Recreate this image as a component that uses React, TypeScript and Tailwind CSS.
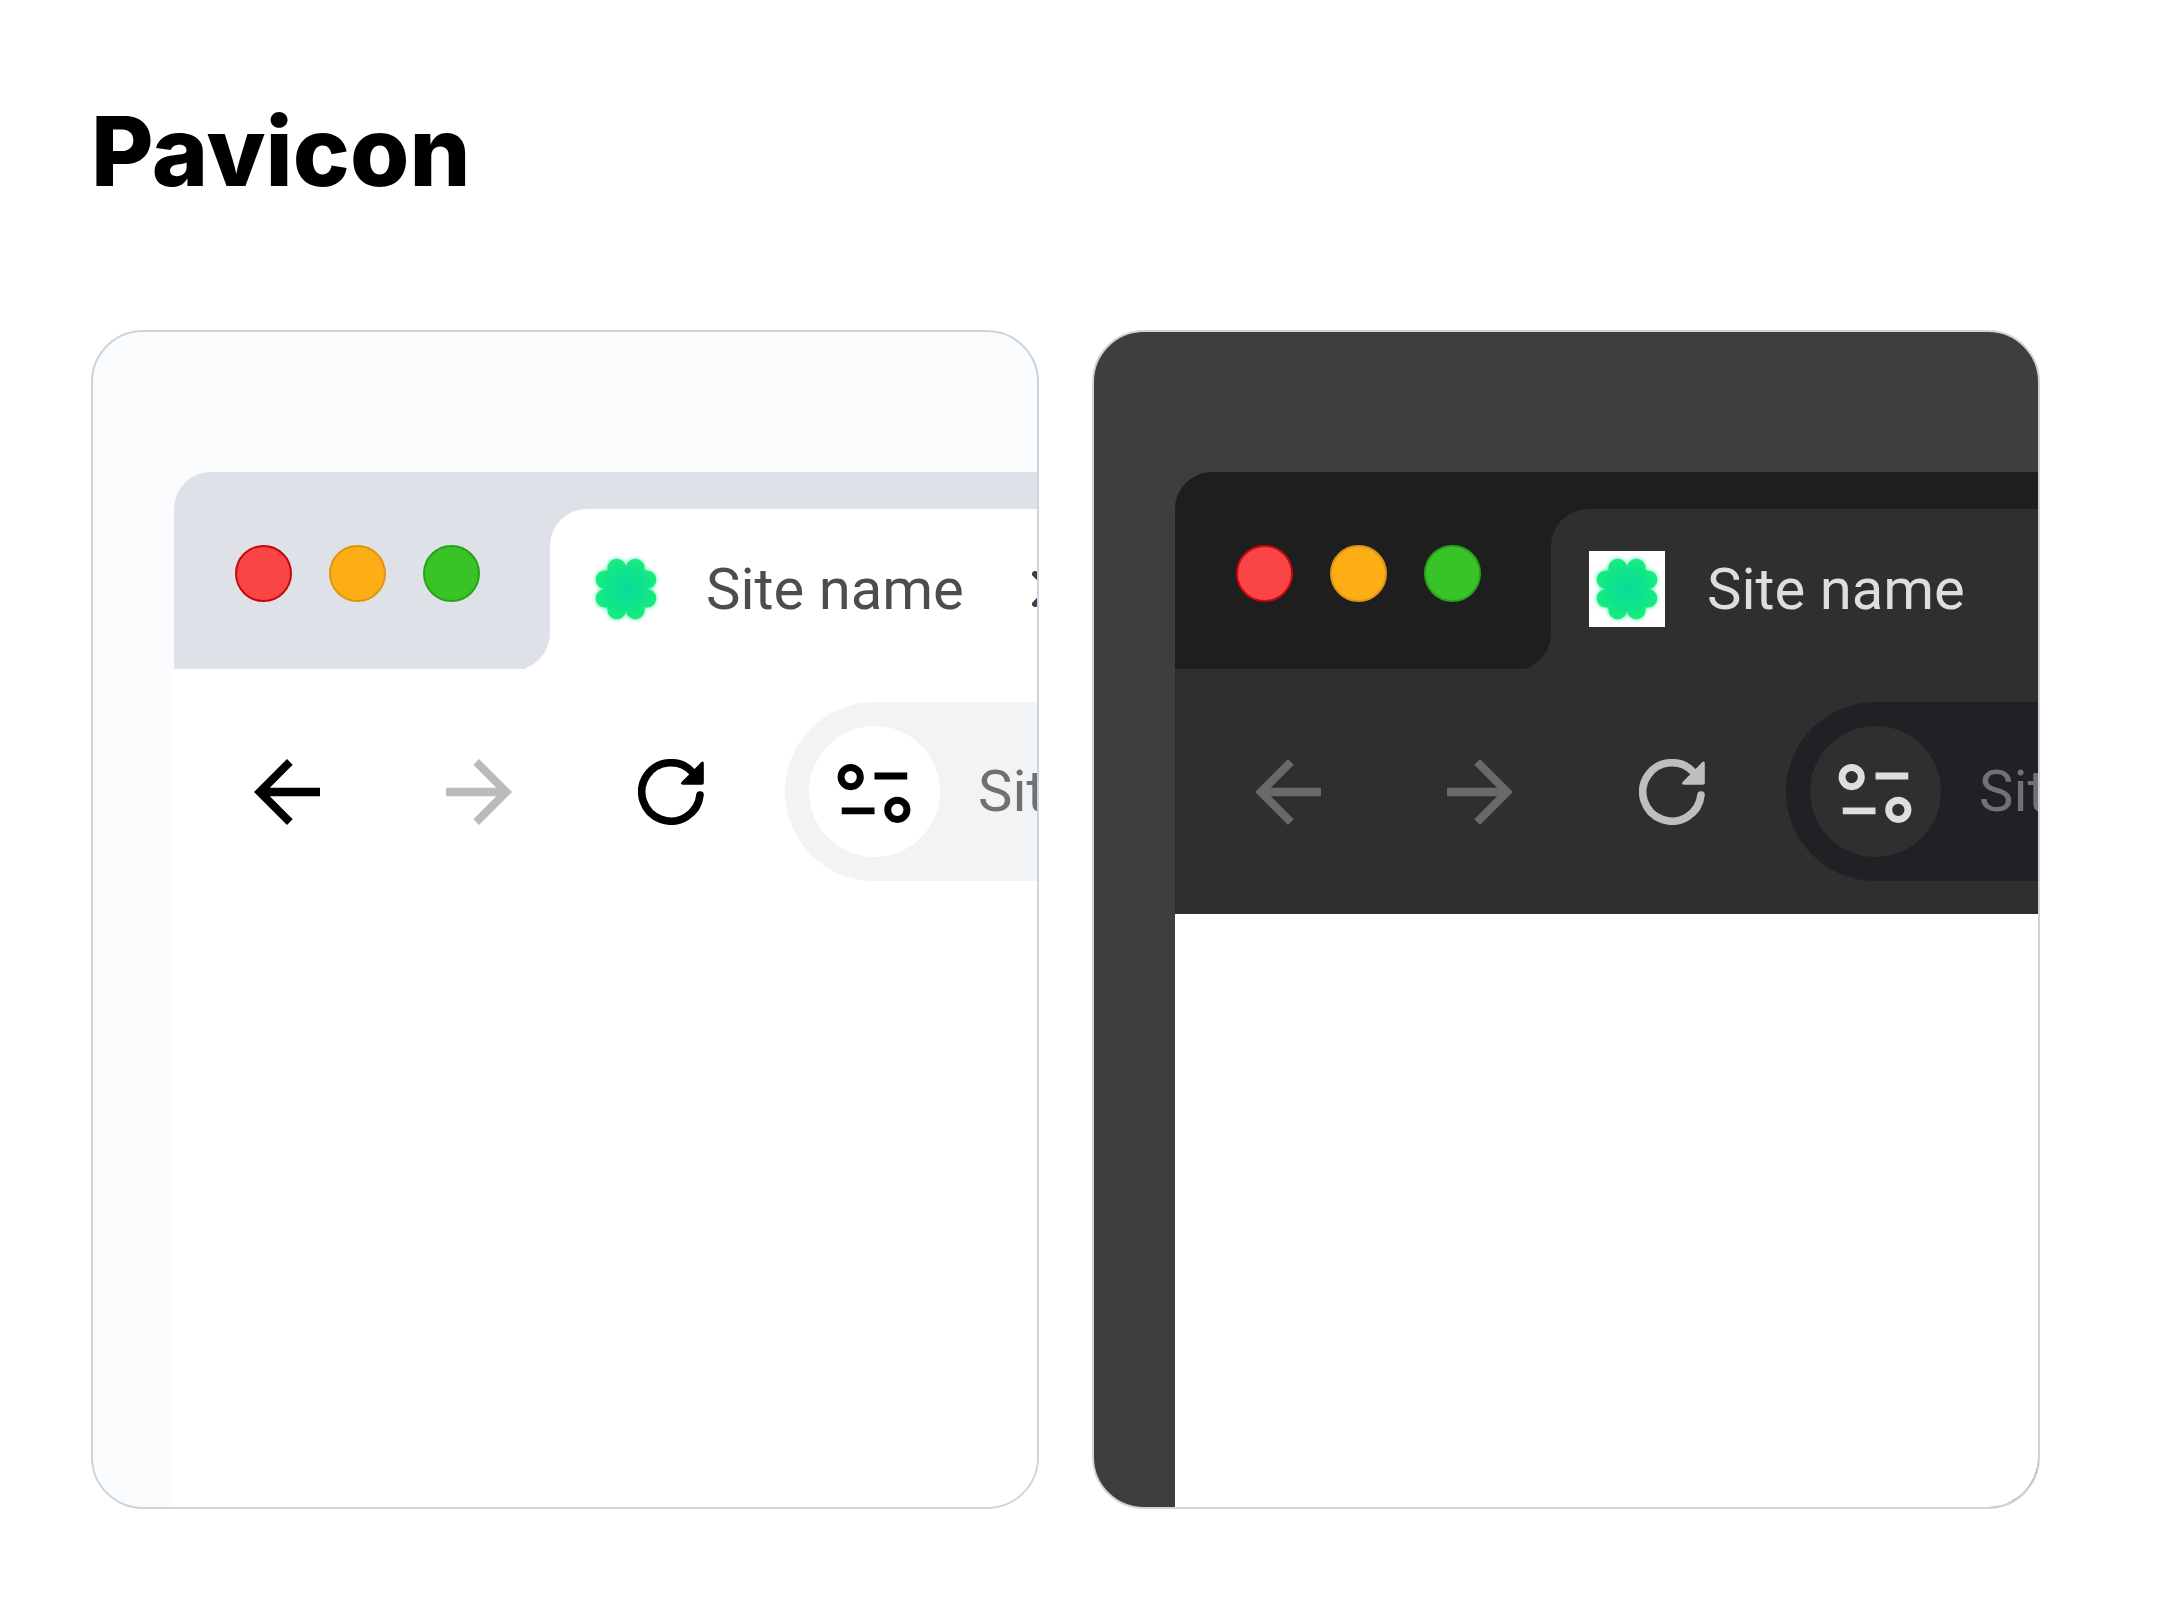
import React from 'react';
import clsx from 'clsx';

type Theme = 'light' | 'dark';

// --- Icons ---
function CloverIcon({ id }: { id: string }) {
  const leaves = [0, 90, 180, 270];
  return (
    <svg viewBox="0 0 76 76" className="size-[76px]" aria-hidden="true">
      <defs>
        <radialGradient id={id} gradientUnits="userSpaceOnUse" cx="38" cy="38" r="31">
          <stop offset="0" stopColor="#06dc9a" />
          <stop offset="0.6" stopColor="#0fe48c" />
          <stop offset="1" stopColor="#18ec7e" />
        </radialGradient>
        <filter id={`${id}-glow`} x="-20%" y="-20%" width="140%" height="140%">
          <feGaussianBlur stdDeviation="2" />
        </filter>
        <g id={`${id}-leaves`}>
          {leaves.map((angle) => (
            <path
              key={angle}
              d="M28.7 7.7A9.3 9.3 0 0 1 38 17V38H17A9.3 9.3 0 0 1 17 19.4H19.4V17A9.3 9.3 0 0 1 28.7 7.7Z"
              transform={`rotate(${angle} 38 38)`}
            />
          ))}
        </g>
      </defs>
      <use href={`#${id}-leaves`} fill="#3df5a0" filter={`url(#${id}-glow)`} />
      <use href={`#${id}-leaves`} fill={`url(#${id})`} />
    </svg>
  );
}

function BackIcon() {
  return (
    <svg viewBox="4 4 16 16" fill="currentColor" className="size-[66px]" aria-hidden="true">
      <path d="M20 10.95H7.83l5.55-5.55L12 4l-8 8 8 8 1.38-1.4-5.55-5.55H20z" />
    </svg>
  );
}

function ForwardIcon() {
  return (
    <svg viewBox="4 4 16 16" fill="currentColor" className="size-[66px]" aria-hidden="true">
      <path d="M4 10.95h12.17L10.62 5.4 12 4l8 8-8 8-1.38-1.4 5.55-5.55H4z" />
    </svg>
  );
}

function ReloadIcon() {
  return (
    <svg viewBox="0 0 66 66" className="size-[66px]" aria-hidden="true">
      <path d="M62 36A29.2 29.2 0 1 1 54.5 13.2" fill="none" stroke="currentColor" strokeWidth="7.6" strokeLinecap="round" />
      <path d="M63.2 3.2Q65.8 1.4 65.8 4.6V24Q65.8 25.8 64 25.8H45Q41.6 25.6 43.6 23Z" fill="currentColor" />
    </svg>
  );
}

function TuneIcon() {
  return (
    <svg viewBox="0 0 132 132" className="size-[131px]" fill="none" stroke="currentColor" strokeWidth="7" aria-hidden="true">
      <circle cx="42" cy="51.5" r="9.7" />
      <circle cx="89" cy="84.5" r="9.7" />
      <path d="M66 50.3h33M33 85.5h33" />
    </svg>
  );
}

function CloseIcon() {
  return (
    <svg viewBox="0 0 36 36" className="size-9" fill="none" stroke="currentColor" strokeWidth="6" strokeLinecap="round" aria-hidden="true">
      <path d="M3 3l30 30M33 3L3 33" />
    </svg>
  );
}

// --- Browser window mockup ---
function BrowserPreview({ theme }: { theme: Theme }) {
  const dark = theme === 'dark';
  const strip = dark ? 'bg-[#1e1e1e]' : 'bg-[#dee1e8]';
  const toolbar = dark ? 'bg-[#2f2f2f]' : 'bg-white';

  return (
    <section
      aria-label={`${theme} theme`}
      className={clsx(
        'min-w-0 flex-1 overflow-hidden rounded-[52px] border-2 border-[#cbd5df] pl-[81px] pt-[140px]',
        dark ? 'bg-[#3e3e3e]' : 'bg-[#fafcfe]'
      )}
    >
      {/* Tab strip */}
      <div className={clsx('h-[37px] rounded-tl-[37px]', strip)} />
      <div className="flex h-40">
        <div className={clsx('shrink-0 overflow-hidden', toolbar)}>
          <div className={clsx('flex h-[162px] w-[376px] gap-[37px] rounded-br-[38px] pl-[61px] pt-9', strip)}>
            <span className="size-[57px] rounded-full border-2 border-[#c4080c] bg-[#f94545]" />
            <span className="size-[57px] rounded-full border-2 border-[#db970f] bg-[#fdae17]" />
            <span className="size-[57px] rounded-full border-2 border-[#27a31a] bg-[#38c427]" />
          </div>
        </div>
        <div className={clsx('min-w-0 flex-1', strip)}>
          <div className={clsx('flex h-full items-center gap-[42px] overflow-hidden rounded-tl-[37px] pl-[38px]', toolbar)}>
            <div className="shrink-0 bg-white">
              <CloverIcon id={`clover-${theme}`} />
            </div>
            <span className={clsx('w-[284px] shrink-0 whitespace-nowrap text-[58px]', dark ? 'text-[#dedede]' : 'text-[#4c4d50]')}>
              Site name
            </span>
            {!dark && (
              <button aria-label="Close tab" className="shrink-0 text-[#3c4043]">
                <CloseIcon />
              </button>
            )}
          </div>
        </div>
      </div>

      {/* Toolbar */}
      <div className={clsx('flex items-center py-[33px] pl-20', toolbar)}>
        <div className="flex shrink-0 gap-[126px]">
          <button aria-label="Back" className={dark ? 'text-[#696969]' : 'text-black'}>
            <BackIcon />
          </button>
          <button aria-label="Forward" className={dark ? 'text-[#696969]' : 'text-[#babcbc]'}>
            <ForwardIcon />
          </button>
          <button aria-label="Reload" className={dark ? 'text-[#bebebe]' : 'text-black'}>
            <ReloadIcon />
          </button>
        </div>
        <div
          className={clsx(
            'ml-[81px] flex min-w-0 flex-1 items-center gap-[38px] rounded-l-full p-6 pr-0',
            dark ? 'bg-[#202124]' : 'bg-[#f1f3f4]'
          )}
        >
          <span className={clsx('shrink-0 rounded-full', dark ? 'bg-[#2f2f2f] text-[#dedede]' : 'bg-white text-black')}>
            <TuneIcon />
          </span>
          <input
            type="text"
            aria-label="Address"
            defaultValue="Site name"
            className={clsx(
              'min-w-0 flex-1 bg-transparent text-[58px] outline-none',
              dark ? 'text-[#717275]' : 'text-[#707173]'
            )}
          />
        </div>
      </div>

      {/* Page body */}
      <div className="h-[593px] bg-white" />
    </section>
  );
}

export default function App() {
  return (
    <main className="min-h-screen bg-white pb-28 pl-[91px] pr-[120px] pt-[92px] font-['Roboto',sans-serif]">
      <h1 className="font-['Inter',sans-serif] text-[96px] font-extrabold leading-[118px] text-black">Pavicon</h1>
      <div className="mt-[120px] flex gap-[53px]">
        <BrowserPreview theme="light" />
        <BrowserPreview theme="dark" />
      </div>
    </main>
  );
}
